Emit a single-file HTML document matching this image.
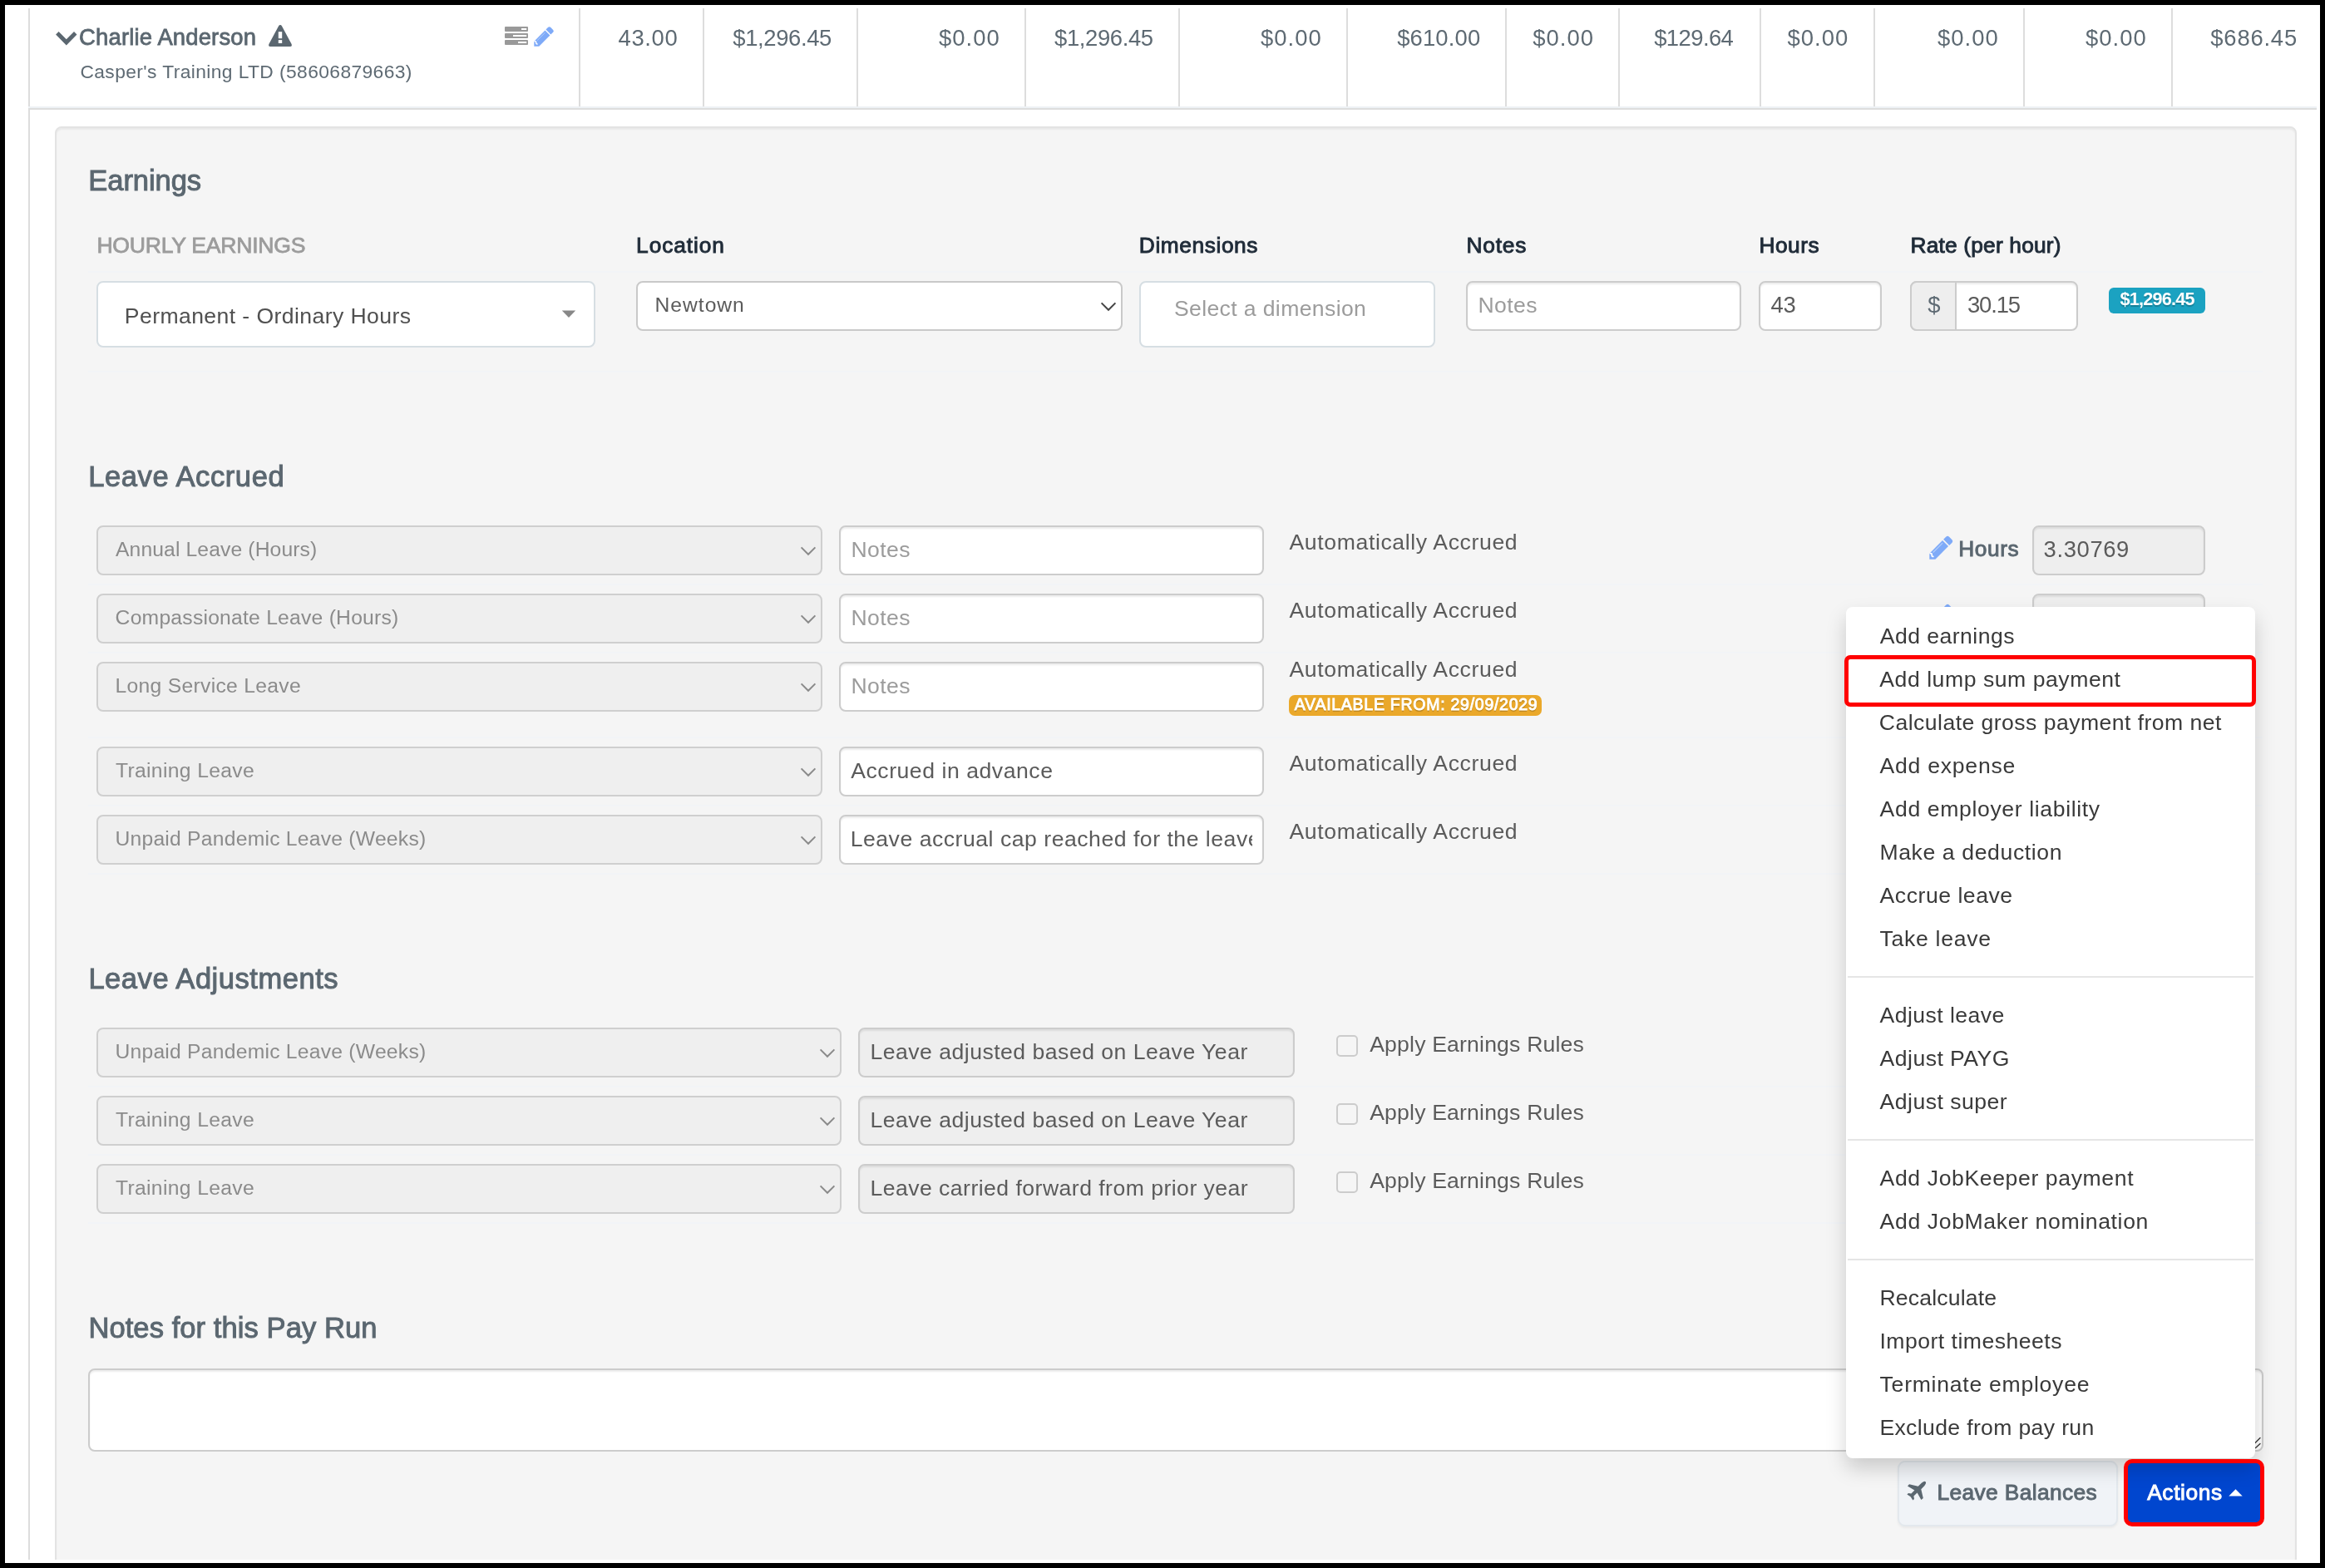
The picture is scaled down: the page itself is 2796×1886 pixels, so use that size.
<!DOCTYPE html>
<html lang="en"><head><meta charset="utf-8"><title>Pay Run</title><style>
html,body{margin:0;padding:0}
body{width:2796px;height:1886px;background:#fff;position:relative;overflow:hidden;font-family:"Liberation Sans",sans-serif}
#frame{position:absolute;left:0;top:0;width:2796px;height:1886px;box-sizing:border-box;border:6px solid #000;z-index:50}
#clip{position:absolute;left:10px;top:10px;width:2776px;height:1866px;overflow:hidden}
#c{position:absolute;left:-10px;top:-10px;width:2796px;height:1886px;will-change:transform}
#c div,#c svg{position:absolute;box-sizing:border-box}
.t{white-space:pre;line-height:60px;height:60px}
.vl{width:2px;background:#ddd;top:10px;height:118px}
.panel{left:66px;top:152px;width:2696px;height:1760px;background:#f5f5f5;border:2px solid #e3e3e3;border-radius:8px;box-shadow:inset 0 2px 2px rgba(0,0,0,.05)}
.s2{background:#fff;border:2px solid #d6dee3;border-radius:8px;height:80px}
.fc{background:#fff;border:2px solid #ccc;border-radius:8px;height:60px;box-shadow:inset 0 2px 2px rgba(0,0,0,.075)}
.sel{background:#fff;border:2px solid #c9c9c9;border-radius:8px;height:60px}
.dis{background:#eee}
.seld{background:#efefef;border-color:#cfcfcf}
.cb{width:26px;height:26px;border:2px solid #ccc;border-radius:5px;background:#f5f5f5}
.hl{background:#f2f4f7;height:2px;left:106px;width:2615px}
.mdiv{left:2222px;width:488px;height:2px;background:#e5e5e5}
</style></head><body>
<div id="clip"><div id="c">
<div style="left:34px;top:10px;width:2px;height:1866px;background:#ddd"></div>
<div class="vl" style="left:696px"></div>
<div class="vl" style="left:845px"></div>
<div class="vl" style="left:1030px"></div>
<div class="vl" style="left:1232px"></div>
<div class="vl" style="left:1417px"></div>
<div class="vl" style="left:1619px"></div>
<div class="vl" style="left:1810px"></div>
<div class="vl" style="left:1946px"></div>
<div class="vl" style="left:2116px"></div>
<div class="vl" style="left:2253px"></div>
<div class="vl" style="left:2433px"></div>
<div class="vl" style="left:2611px"></div>
<div style="left:34px;top:128px;width:2752px;height:2px;background:#eef2f5"></div>
<div style="left:34px;top:130px;width:2752px;height:2px;background:#ddd"></div>
<div class="panel"></div>
<div class="hl" style="top:326px"></div>
<div class="hl" style="top:446px"></div>
<div class="hl" style="top:702px"></div>
<div class="hl" style="top:784px"></div>
<div class="hl" style="top:886px"></div>
<div class="hl" style="top:968px"></div>
<div class="hl" style="top:1050px"></div>
<div class="hl" style="top:1306px"></div>
<div class="hl" style="top:1388px"></div>
<div class="hl" style="top:1470px"></div>
<svg style="left:66px;top:37px" width="28" height="20" viewBox="0 0 28 20"><path d="M1.1 4.6 L4.6 1.1 L13.8 10.2 L23 1.1 L26.5 4.6 L13.8 17.4 Z" fill="#5b6770"/></svg>
<svg style="left:322px;top:29px" width="30" height="28" viewBox="0 0 30 28"><path d="M15 1 Q16.2 1 16.9 2.3 L28.6 24 Q29.6 27 27 27.1 L3 27.1 Q0.4 27 1.4 24 L13.1 2.3 Q13.8 1 15 1 Z" fill="#5b6770"/><rect x="12.8" y="9.2" width="4.4" height="8" fill="#fff"/><rect x="12.8" y="19.1" width="4.4" height="3.9" fill="#fff"/></svg>
<svg style="left:607px;top:32px" width="28" height="22" viewBox="0 0 28 22"><g fill="#999"><rect x="0" y="0" width="28" height="6" rx="1"/><rect x="0" y="8" width="28" height="6" rx="1"/><rect x="0" y="16" width="28" height="6" rx="1"/></g><g fill="#fff"><rect x="20" y="2" width="6.2" height="2"/><rect x="10" y="10" width="16.2" height="2"/><rect x="16" y="18" width="10.2" height="2"/></g></svg>
<svg style="left:636.80px;top:29.30px" width="32.00" height="32.00" viewBox="0 0 32 32"><g transform="rotate(45 16 16)"><path d="M11.8 6.9 L11.8 3 Q11.8 1 13.8 1 L18.2 1 Q20.2 1 20.2 3 L20.2 6.9 Z" fill="#7eaaf8"/><path d="M11.8 8.3 L20.2 8.3 L20.2 26.9 L16 31.1 L11.8 26.9 Z" fill="#7eaaf8"/><path d="M12.3 26.3 Q13.5 24.9 14.5 26.2 Q15.5 27.6 16.7 26.5" fill="none" stroke="#fff" stroke-width="1.5" stroke-linecap="round"/><path d="M13.7 10 L13.7 23.6" stroke="#b5cffb" stroke-width="0.9"/></g></svg>
<div class="s2" style="left:116px;top:338px;width:600px"></div>
<svg style="left:675px;top:373px" width="18" height="10" viewBox="0 0 18 10"><path d="M0.8 0.5 L17.2 0.5 L9 9 Z" fill="#888"/></svg>
<div class="s2" style="left:1370px;top:338px;width:356px"></div>
<div class="sel" style="left:765px;top:338px;width:585px"></div>
<svg style="left:1323px;top:362.5px" width="20" height="12" viewBox="0 0 20 12"><path d="M1.6 1.4 L10 9.8 L18.4 1.4" fill="none" stroke="#444" stroke-width="2"/></svg>
<div class="fc" style="left:1763px;top:338px;width:331px"></div>
<div class="fc" style="left:2115px;top:338px;width:148px"></div>
<div class="fc" style="left:2297px;top:338px;width:202px"></div>
<div style="left:2297px;top:338px;width:56px;height:60px;background:#eee;border:2px solid #ccc;border-radius:8px 0 0 8px"></div>
<div style="left:2536px;top:346px;width:116px;height:31px;background:#1ba2c1;border-radius:6px"></div>
<div class="sel seld" style="left:116px;top:632px;width:873px"></div>
<svg style="left:961.7px;top:656.5px" width="20" height="12" viewBox="0 0 20 12"><path d="M1.6 1.4 L10 9.8 L18.4 1.4" fill="none" stroke="#8a8a8a" stroke-width="2"/></svg>
<div class="fc" style="left:1009px;top:632px;width:510.5px"></div>
<svg style="left:2313.76px;top:640.96px" width="38.08" height="38.08" viewBox="0 0 32 32"><g transform="rotate(45 16 16)"><path d="M11.8 6.9 L11.8 3 Q11.8 1 13.8 1 L18.2 1 Q20.2 1 20.2 3 L20.2 6.9 Z" fill="#7eaaf8"/><path d="M11.8 8.3 L20.2 8.3 L20.2 26.9 L16 31.1 L11.8 26.9 Z" fill="#7eaaf8"/><path d="M12.3 26.3 Q13.5 24.9 14.5 26.2 Q15.5 27.6 16.7 26.5" fill="none" stroke="#fff" stroke-width="1.5" stroke-linecap="round"/><path d="M13.7 10 L13.7 23.6" stroke="#b5cffb" stroke-width="0.9"/></g></svg>
<div class="fc dis" style="left:2444px;top:632px;width:208px"></div>
<div class="sel seld" style="left:116px;top:714px;width:873px"></div>
<svg style="left:961.7px;top:738.5px" width="20" height="12" viewBox="0 0 20 12"><path d="M1.6 1.4 L10 9.8 L18.4 1.4" fill="none" stroke="#8a8a8a" stroke-width="2"/></svg>
<div class="fc" style="left:1009px;top:714px;width:510.5px"></div>
<svg style="left:2313.76px;top:722.96px" width="38.08" height="38.08" viewBox="0 0 32 32"><g transform="rotate(45 16 16)"><path d="M11.8 6.9 L11.8 3 Q11.8 1 13.8 1 L18.2 1 Q20.2 1 20.2 3 L20.2 6.9 Z" fill="#7eaaf8"/><path d="M11.8 8.3 L20.2 8.3 L20.2 26.9 L16 31.1 L11.8 26.9 Z" fill="#7eaaf8"/><path d="M12.3 26.3 Q13.5 24.9 14.5 26.2 Q15.5 27.6 16.7 26.5" fill="none" stroke="#fff" stroke-width="1.5" stroke-linecap="round"/><path d="M13.7 10 L13.7 23.6" stroke="#b5cffb" stroke-width="0.9"/></g></svg>
<div class="fc dis" style="left:2444px;top:714px;width:208px"></div>
<div class="sel seld" style="left:116px;top:796px;width:873px"></div>
<svg style="left:961.7px;top:820.5px" width="20" height="12" viewBox="0 0 20 12"><path d="M1.6 1.4 L10 9.8 L18.4 1.4" fill="none" stroke="#8a8a8a" stroke-width="2"/></svg>
<div class="fc" style="left:1009px;top:796px;width:510.5px"></div>
<svg style="left:2313.76px;top:804.96px" width="38.08" height="38.08" viewBox="0 0 32 32"><g transform="rotate(45 16 16)"><path d="M11.8 6.9 L11.8 3 Q11.8 1 13.8 1 L18.2 1 Q20.2 1 20.2 3 L20.2 6.9 Z" fill="#7eaaf8"/><path d="M11.8 8.3 L20.2 8.3 L20.2 26.9 L16 31.1 L11.8 26.9 Z" fill="#7eaaf8"/><path d="M12.3 26.3 Q13.5 24.9 14.5 26.2 Q15.5 27.6 16.7 26.5" fill="none" stroke="#fff" stroke-width="1.5" stroke-linecap="round"/><path d="M13.7 10 L13.7 23.6" stroke="#b5cffb" stroke-width="0.9"/></g></svg>
<div class="fc dis" style="left:2444px;top:796px;width:208px"></div>
<div class="sel seld" style="left:116px;top:898px;width:873px"></div>
<svg style="left:961.7px;top:922.5px" width="20" height="12" viewBox="0 0 20 12"><path d="M1.6 1.4 L10 9.8 L18.4 1.4" fill="none" stroke="#8a8a8a" stroke-width="2"/></svg>
<div class="fc" style="left:1009px;top:898px;width:510.5px"></div>
<svg style="left:2313.76px;top:906.96px" width="38.08" height="38.08" viewBox="0 0 32 32"><g transform="rotate(45 16 16)"><path d="M11.8 6.9 L11.8 3 Q11.8 1 13.8 1 L18.2 1 Q20.2 1 20.2 3 L20.2 6.9 Z" fill="#7eaaf8"/><path d="M11.8 8.3 L20.2 8.3 L20.2 26.9 L16 31.1 L11.8 26.9 Z" fill="#7eaaf8"/><path d="M12.3 26.3 Q13.5 24.9 14.5 26.2 Q15.5 27.6 16.7 26.5" fill="none" stroke="#fff" stroke-width="1.5" stroke-linecap="round"/><path d="M13.7 10 L13.7 23.6" stroke="#b5cffb" stroke-width="0.9"/></g></svg>
<div class="fc dis" style="left:2444px;top:898px;width:208px"></div>
<div class="sel seld" style="left:116px;top:980px;width:873px"></div>
<svg style="left:961.7px;top:1004.5px" width="20" height="12" viewBox="0 0 20 12"><path d="M1.6 1.4 L10 9.8 L18.4 1.4" fill="none" stroke="#8a8a8a" stroke-width="2"/></svg>
<div class="fc" style="left:1009px;top:980px;width:510.5px"></div>
<svg style="left:2313.76px;top:988.96px" width="38.08" height="38.08" viewBox="0 0 32 32"><g transform="rotate(45 16 16)"><path d="M11.8 6.9 L11.8 3 Q11.8 1 13.8 1 L18.2 1 Q20.2 1 20.2 3 L20.2 6.9 Z" fill="#7eaaf8"/><path d="M11.8 8.3 L20.2 8.3 L20.2 26.9 L16 31.1 L11.8 26.9 Z" fill="#7eaaf8"/><path d="M12.3 26.3 Q13.5 24.9 14.5 26.2 Q15.5 27.6 16.7 26.5" fill="none" stroke="#fff" stroke-width="1.5" stroke-linecap="round"/><path d="M13.7 10 L13.7 23.6" stroke="#b5cffb" stroke-width="0.9"/></g></svg>
<div class="fc dis" style="left:2444px;top:980px;width:208px"></div>
<div style="left:1550px;top:836px;width:304px;height:25px;background:#eaa82a;border-radius:7px"></div>
<div class="sel seld" style="left:116px;top:1236px;width:896px"></div>
<svg style="left:985px;top:1260.5px" width="20" height="12" viewBox="0 0 20 12"><path d="M1.6 1.4 L10 9.8 L18.4 1.4" fill="none" stroke="#8a8a8a" stroke-width="2"/></svg>
<div class="fc dis" style="left:1032px;top:1236px;width:525px"></div>
<div class="cb" style="left:1607px;top:1245px"></div>
<div class="sel seld" style="left:116px;top:1318px;width:896px"></div>
<svg style="left:985px;top:1342.5px" width="20" height="12" viewBox="0 0 20 12"><path d="M1.6 1.4 L10 9.8 L18.4 1.4" fill="none" stroke="#8a8a8a" stroke-width="2"/></svg>
<div class="fc dis" style="left:1032px;top:1318px;width:525px"></div>
<div class="cb" style="left:1607px;top:1327px"></div>
<div class="sel seld" style="left:116px;top:1400px;width:896px"></div>
<svg style="left:985px;top:1424.5px" width="20" height="12" viewBox="0 0 20 12"><path d="M1.6 1.4 L10 9.8 L18.4 1.4" fill="none" stroke="#8a8a8a" stroke-width="2"/></svg>
<div class="fc dis" style="left:1032px;top:1400px;width:525px"></div>
<div class="cb" style="left:1607px;top:1409px"></div>
<div class="fc" style="left:106px;top:1646px;width:2615.5px;height:100px"></div>
<svg style="left:2701px;top:1726px" width="18" height="18" viewBox="0 0 18 18"><path d="M17 3.5 L5 15.5 M17 10.5 L11.5 15.5" stroke="#3c3c3c" stroke-width="1.4" stroke-linecap="round" fill="none"/></svg>
<div style="left:2282px;top:1757px;width:265px;height:79px;background:#f0f3f7;border:2px solid #e3e8ed;border-radius:9px;box-shadow:0 2px 3px rgba(0,0,0,.05)"></div>
<svg style="left:2293px;top:1781px" width="24" height="24" viewBox="0 0 24 24"><path d="M22.6 1.2 Q24 2.6 21.2 6.2 L17.3 10.3 L19.8 21 L17.4 23 L12.6 14.6 L8.4 18.6 L9 22 L7.4 23.6 L4.6 19.3 L0.4 16.6 L2 15 L5.4 15.6 L9.4 11.4 L1 6.6 L3 4.2 L13.7 6.7 L17.8 2.8 Q21.4 0 22.6 1.2 Z" fill="#5b6770"/></svg>
<div style="left:2556px;top:1757px;width:165px;height:77px;background:#0046cf;border-radius:8px"></div>
<svg style="left:2679.5px;top:1791px" width="17" height="9" viewBox="0 0 17 9"><path d="M0.3 8.6 L8.5 0.3 L16.7 8.6 Z" fill="#fff"/></svg>
<div class="t" style="left:95.1px;top:14.8px;font-size:27.44px;letter-spacing:0.16px;color:#5b6770;-webkit-text-stroke:0.8px #5b6770;">Charlie Anderson</div>
<div class="t" style="left:96.4px;top:56.2px;font-size:22.8px;letter-spacing:0.403px;color:#5e6a73;">Casper's Training LTD (58606879663)</div>
<div class="t" style="left:743.6px;top:15.8px;font-size:27.44px;letter-spacing:0.6px;color:#5e6a73;">43.00</div>
<div class="t" style="left:881.3px;top:15.8px;font-size:27.44px;letter-spacing:-0.375px;color:#5e6a73;">$1,296.45</div>
<div class="t" style="left:1129px;top:15.8px;font-size:27.44px;letter-spacing:1.0px;color:#5e6a73;">$0.00</div>
<div class="t" style="left:1268px;top:15.8px;font-size:27.44px;letter-spacing:-0.375px;color:#5e6a73;">$1,296.45</div>
<div class="t" style="left:1516px;top:15.8px;font-size:27.44px;letter-spacing:1.0px;color:#5e6a73;">$0.00</div>
<div class="t" style="left:1680.2px;top:15.8px;font-size:27.44px;letter-spacing:0.133px;color:#5e6a73;">$610.00</div>
<div class="t" style="left:1843.3px;top:15.8px;font-size:27.44px;letter-spacing:1.0px;color:#5e6a73;">$0.00</div>
<div class="t" style="left:1989.2px;top:15.8px;font-size:27.44px;letter-spacing:-0.583px;color:#5e6a73;">$129.64</div>
<div class="t" style="left:2149.5px;top:15.8px;font-size:27.44px;letter-spacing:1.0px;color:#5e6a73;">$0.00</div>
<div class="t" style="left:2330px;top:15.8px;font-size:27.44px;letter-spacing:1.0px;color:#5e6a73;">$0.00</div>
<div class="t" style="left:2508px;top:15.8px;font-size:27.44px;letter-spacing:1.0px;color:#5e6a73;">$0.00</div>
<div class="t" style="left:2658.3px;top:15.8px;font-size:27.44px;letter-spacing:0.783px;color:#5e6a73;">$686.45</div>
<div class="t" style="left:106.3px;top:187.4px;font-size:34.56px;letter-spacing:-0.086px;color:#5b6770;-webkit-text-stroke:1.0px #5b6770;">Earnings</div>
<div class="t" style="left:116.4px;top:265px;font-size:26.6px;letter-spacing:-0.257px;color:#9c9c9c;-webkit-text-stroke:0.8px #9c9c9c;">HOURLY EARNINGS</div>
<div class="t" style="left:765.1px;top:265px;font-size:26.32px;letter-spacing:0.914px;color:#1f2b38;-webkit-text-stroke:0.95px #1f2b38;">Location</div>
<div class="t" style="left:1369.8px;top:265px;font-size:26.32px;letter-spacing:0.578px;color:#1f2b38;-webkit-text-stroke:0.95px #1f2b38;">Dimensions</div>
<div class="t" style="left:1763.5px;top:265px;font-size:26.32px;letter-spacing:0.775px;color:#1f2b38;-webkit-text-stroke:0.95px #1f2b38;">Notes</div>
<div class="t" style="left:2115.5px;top:265px;font-size:26.32px;letter-spacing:0.475px;color:#1f2b38;-webkit-text-stroke:0.95px #1f2b38;">Hours</div>
<div class="t" style="left:2297.5px;top:265px;font-size:26.32px;letter-spacing:0.186px;color:#1f2b38;-webkit-text-stroke:0.95px #1f2b38;">Rate (per hour)</div>
<div class="t" style="left:149.8px;top:349.5px;font-size:26.6px;letter-spacing:0.408px;color:#505050;">Permanent - Ordinary Hours</div>
<div class="t" style="left:787.6px;top:336.9px;font-size:24.7px;letter-spacing:0.95px;color:#5b5b5b;">Newtown</div>
<div class="t" style="left:1411.9px;top:341px;font-size:26.6px;letter-spacing:0.371px;color:#9c9c9c;">Select a dimension</div>
<div class="t" style="left:1777.5px;top:336.5px;font-size:26.6px;letter-spacing:0.4px;color:#9c9c9c;">Notes</div>
<div class="t" style="left:2129.5px;top:337px;font-size:27.44px;letter-spacing:-0.2px;color:#5b5b5b;">43</div>
<div class="t" style="left:2318.3px;top:337px;font-size:27.44px;letter-spacing:0px;color:#5e6a73;">$</div>
<div class="t" style="left:2365.9px;top:337px;font-size:27.44px;letter-spacing:-1.125px;color:#5b5b5b;">30.15</div>
<div class="t" style="left:2549.6px;top:329.9px;font-size:21.63px;letter-spacing:-0.775px;color:#ffffff;font-weight:bold;text-shadow:0 1.5px 1px rgba(0,0,0,.22);">$1,296.45</div>
<div class="t" style="left:106.2px;top:542.7px;font-size:34.56px;letter-spacing:0.575px;color:#5b6770;-webkit-text-stroke:1.0px #5b6770;">Leave Accrued</div>
<div class="t" style="left:139px;top:630.9px;font-size:24.7px;letter-spacing:0.111px;color:#8b8b8b;">Annual Leave (Hours)</div>
<div class="t" style="left:138.6px;top:712.9px;font-size:24.7px;letter-spacing:0.227px;color:#8b8b8b;">Compassionate Leave (Hours)</div>
<div class="t" style="left:138.4px;top:794.9px;font-size:24.7px;letter-spacing:0.3px;color:#8b8b8b;">Long Service Leave</div>
<div class="t" style="left:138.9px;top:896.9px;font-size:24.7px;letter-spacing:0.346px;color:#8b8b8b;">Training Leave</div>
<div class="t" style="left:138.4px;top:978.9px;font-size:24.7px;letter-spacing:0.232px;color:#8b8b8b;">Unpaid Pandemic Leave (Weeks)</div>
<div class="t" style="left:1023.5px;top:630.9px;font-size:26.6px;letter-spacing:0.4px;color:#9c9c9c;">Notes</div>
<div class="t" style="left:1023.5px;top:712.9px;font-size:26.6px;letter-spacing:0.4px;color:#9c9c9c;">Notes</div>
<div class="t" style="left:1023.5px;top:794.9px;font-size:26.6px;letter-spacing:0.4px;color:#9c9c9c;">Notes</div>
<div class="t" style="left:1023.2px;top:897px;font-size:26.6px;letter-spacing:0.541px;color:#5b5b5b;">Accrued in advance</div>
<div style="left:1022.7px;top:979px;width:483.1px;height:60px;overflow:hidden"><div class="t" style="left:0px;top:0px;font-size:26.6px;letter-spacing:0.52px;color:#5b5b5b;">Leave accrual cap reached for the leave category</div></div>
<div class="t" style="left:1550.5px;top:622.1px;font-size:26.6px;letter-spacing:0.625px;color:#5b5b5b;">Automatically Accrued</div>
<div class="t" style="left:1550.5px;top:704px;font-size:26.6px;letter-spacing:0.625px;color:#5b5b5b;">Automatically Accrued</div>
<div class="t" style="left:1550.5px;top:775px;font-size:26.6px;letter-spacing:0.625px;color:#5b5b5b;">Automatically Accrued</div>
<div class="t" style="left:1550.5px;top:888px;font-size:26.6px;letter-spacing:0.625px;color:#5b5b5b;">Automatically Accrued</div>
<div class="t" style="left:1550.5px;top:970px;font-size:26.6px;letter-spacing:0.625px;color:#5b5b5b;">Automatically Accrued</div>
<div class="t" style="left:1556.8px;top:816.5px;font-size:19.53px;letter-spacing:0.728px;color:#ffffff;-webkit-text-stroke:0.9px #ffffff;text-shadow:0 1.5px 1px rgba(0,0,0,.22);">AVAILABLE FROM: 29/09/2029</div>
<div class="t" style="left:2355.3px;top:630.0px;font-size:26.32px;letter-spacing:0.525px;color:#5b6770;-webkit-text-stroke:0.95px #5b6770;">Hours</div>
<div class="t" style="left:2457.6px;top:630.9px;font-size:27.44px;letter-spacing:0.6px;color:#5b5b5b;">3.30769</div>
<div class="t" style="left:106.4px;top:1146.7px;font-size:34.56px;letter-spacing:0.519px;color:#5b6770;-webkit-text-stroke:1.0px #5b6770;">Leave Adjustments</div>
<div class="t" style="left:138.4px;top:1234.9px;font-size:24.7px;letter-spacing:0.232px;color:#8b8b8b;">Unpaid Pandemic Leave (Weeks)</div>
<div class="t" style="left:138.9px;top:1316.9px;font-size:24.7px;letter-spacing:0.346px;color:#8b8b8b;">Training Leave</div>
<div class="t" style="left:138.9px;top:1398.9px;font-size:24.7px;letter-spacing:0.346px;color:#8b8b8b;">Training Leave</div>
<div class="t" style="left:1046.4px;top:1234.8px;font-size:26.6px;letter-spacing:0.491px;color:#5b5b5b;">Leave adjusted based on Leave Year</div>
<div class="t" style="left:1046.4px;top:1316.8px;font-size:26.6px;letter-spacing:0.491px;color:#5b5b5b;">Leave adjusted based on Leave Year</div>
<div class="t" style="left:1046.4px;top:1398.8px;font-size:26.6px;letter-spacing:0.467px;color:#5b5b5b;">Leave carried forward from prior year</div>
<div class="t" style="left:1647.2px;top:1225.7px;font-size:26.6px;letter-spacing:0.179px;color:#5b5b5b;">Apply Earnings Rules</div>
<div class="t" style="left:1647.2px;top:1307.6px;font-size:26.6px;letter-spacing:0.179px;color:#5b5b5b;">Apply Earnings Rules</div>
<div class="t" style="left:1647.2px;top:1389.6px;font-size:26.6px;letter-spacing:0.179px;color:#5b5b5b;">Apply Earnings Rules</div>
<div class="t" style="left:106.4px;top:1566.7px;font-size:34.56px;letter-spacing:0.071px;color:#5b6770;-webkit-text-stroke:1.0px #5b6770;">Notes for this Pay Run</div>
<div class="t" style="left:2329.4px;top:1764.7px;font-size:26.32px;letter-spacing:0.392px;color:#5b6770;-webkit-text-stroke:0.95px #5b6770;">Leave Balances</div>
<div class="t" style="left:2582.2px;top:1764.5px;font-size:26.32px;letter-spacing:0.633px;color:#ffffff;-webkit-text-stroke:0.95px #ffffff;">Actions</div>
<div style="left:2220px;top:730px;width:492px;height:1024px;background:#fff;border-radius:8px;box-shadow:0 12px 24px rgba(0,0,0,.175)"></div>
<div style="left:2218px;top:788px;width:495px;height:62px;border:5px solid #f00;border-radius:7px"></div>
<div style="left:2554px;top:1755px;width:169px;height:81px;border:5px solid #f00;border-radius:10px"></div>
<div class="mdiv" style="top:1174px"></div>
<div class="mdiv" style="top:1370px"></div>
<div class="mdiv" style="top:1514px"></div>
<div class="t" style="left:2260.8px;top:734.9px;font-size:26.6px;letter-spacing:0.455px;color:#3a3a3a;">Add earnings</div>
<div class="t" style="left:2260.3px;top:786.9px;font-size:26.6px;letter-spacing:0.542px;color:#3a3a3a;">Add lump sum payment</div>
<div class="t" style="left:2259.8px;top:839px;font-size:26.6px;letter-spacing:0.452px;color:#3a3a3a;">Calculate gross payment from net</div>
<div class="t" style="left:2260.6px;top:891px;font-size:26.6px;letter-spacing:0.74px;color:#3a3a3a;">Add expense</div>
<div class="t" style="left:2260.6px;top:943px;font-size:26.6px;letter-spacing:0.629px;color:#3a3a3a;">Add employer liability</div>
<div class="t" style="left:2260.4px;top:995px;font-size:26.6px;letter-spacing:0.613px;color:#3a3a3a;">Make a deduction</div>
<div class="t" style="left:2260.6px;top:1046.6px;font-size:26.6px;letter-spacing:0.527px;color:#3a3a3a;">Accrue leave</div>
<div class="t" style="left:2260.6px;top:1098.6px;font-size:26.6px;letter-spacing:0.689px;color:#3a3a3a;">Take leave</div>
<div class="t" style="left:2260.6px;top:1191px;font-size:26.6px;letter-spacing:0.427px;color:#3a3a3a;">Adjust leave</div>
<div class="t" style="left:2260.6px;top:1243px;font-size:26.6px;letter-spacing:0.46px;color:#3a3a3a;">Adjust PAYG</div>
<div class="t" style="left:2260.6px;top:1295px;font-size:26.6px;letter-spacing:0.482px;color:#3a3a3a;">Adjust super</div>
<div class="t" style="left:2260.6px;top:1387.4px;font-size:26.6px;letter-spacing:0.61px;color:#3a3a3a;">Add JobKeeper payment</div>
<div class="t" style="left:2260.6px;top:1439.4px;font-size:26.6px;letter-spacing:0.627px;color:#3a3a3a;">Add JobMaker nomination</div>
<div class="t" style="left:2260.4px;top:1530.7px;font-size:26.6px;letter-spacing:0.18px;color:#3a3a3a;">Recalculate</div>
<div class="t" style="left:2260.4px;top:1582.7px;font-size:26.6px;letter-spacing:0.481px;color:#3a3a3a;">Import timesheets</div>
<div class="t" style="left:2260.6px;top:1634.7px;font-size:26.6px;letter-spacing:0.729px;color:#3a3a3a;">Terminate employee</div>
<div class="t" style="left:2260.4px;top:1686.9px;font-size:26.6px;letter-spacing:0.347px;color:#3a3a3a;">Exclude from pay run</div>
</div></div>
<div id="frame"></div>
</body></html>
